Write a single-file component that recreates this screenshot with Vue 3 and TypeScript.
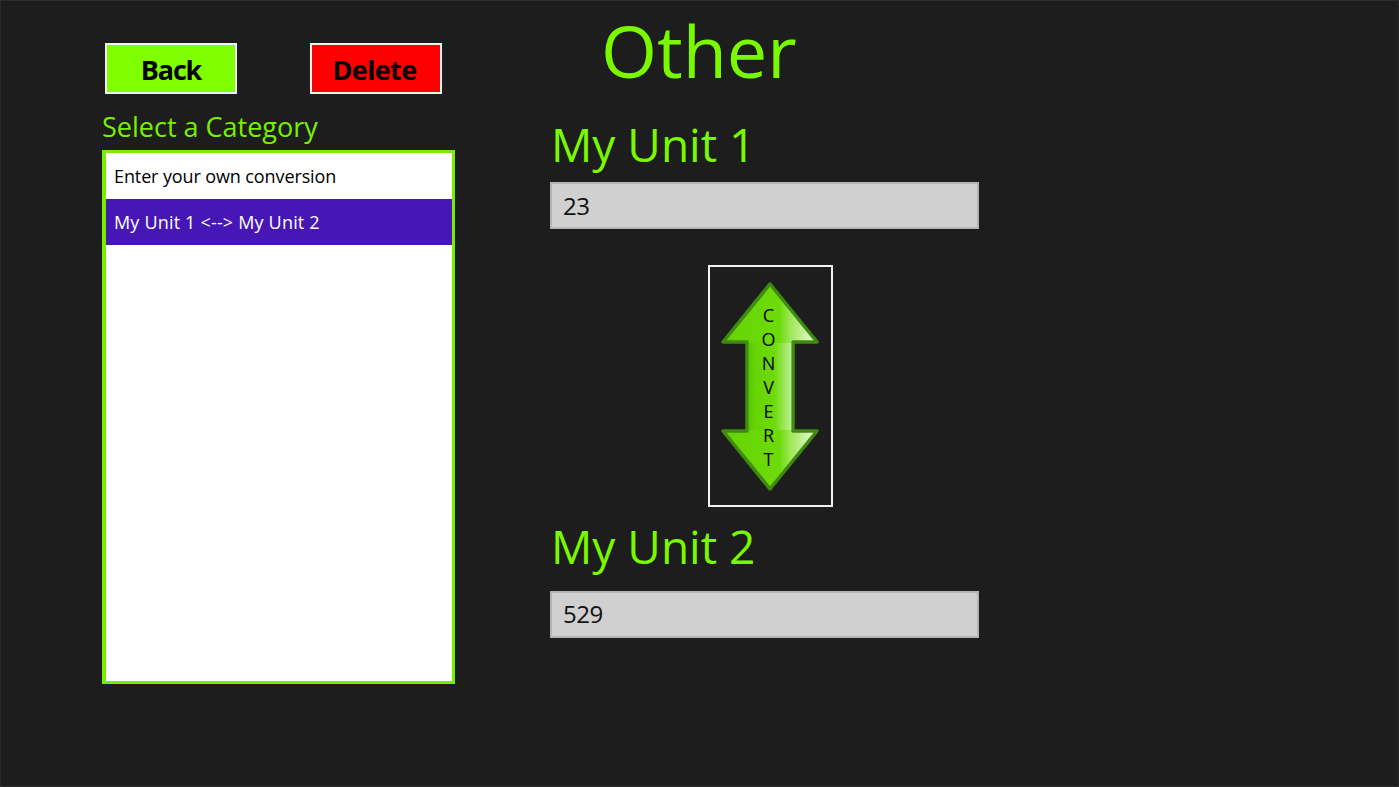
<script setup lang="ts">
const letters: string[] = 'CONVERT'.split('')
const items = [
  { label: 'Enter your own conversion', selected: false },
  { label: 'My Unit 1 <--> My Unit 2', selected: true },
]
</script>

<template>
  <div class="page">
    <aside class="left">
      <div class="actions">
        <button class="btn back">Back</button>
        <button class="btn del">Delete</button>
      </div>
      <div class="cat-label">Select a Category</div>
      <ul class="list">
        <li v-for="it in items" :key="it.label" class="item" :class="{ selected: it.selected }">{{ it.label }}</li>
      </ul>
    </aside>
    <main class="right">
      <h1 class="title">Other</h1>
      <h2 class="unit first">My Unit 1</h2>
      <div class="field">23</div>
      <button class="convert">
        <svg class="arrow" width="121" height="238" viewBox="0 0 121 238">
          <defs>
            <linearGradient id="g" x1="0" y1="0" x2="1" y2="0">
              <stop offset="0" stop-color="#66d404" />
              <stop offset="0.6" stop-color="#6cdb08" />
              <stop offset="0.72" stop-color="#9ee85a" />
              <stop offset="0.95" stop-color="#e2f8cc" />
            </linearGradient>
            <linearGradient id="s" x1="0" y1="0" x2="1" y2="0">
              <stop offset="0" stop-color="#58c404" />
              <stop offset="0.15" stop-color="#66d404" />
              <stop offset="0.6" stop-color="#6cdb08" />
              <stop offset="1" stop-color="#bdf092" />
            </linearGradient>
          </defs>
          <path d="M60 17 L107 75 L83 75 L83 164 L107 164 L60 222 L13 164 L37 164 L37 75 L13 75 Z" fill="url(#g)" stroke="#3f8a10" stroke-width="3.5" stroke-linejoin="round" />
          <rect x="38.75" y="76" width="42.5" height="87" fill="url(#s)" />
        </svg>
        <span class="letters">
          <span v-for="(l, i) in letters" :key="i" class="letter">{{ l }}</span>
        </span>
      </button>
      <h2 class="unit second">My Unit 2</h2>
      <div class="field last">529</div>
    </main>
  </div>
</template>

<style scoped>
.page {
  width: 1399px;
  height: 787px;
  box-sizing: border-box;
  background: #1d1d1d;
  box-shadow: inset 0 0 0 1px #2c2c2c;
  display: flex;
  font-family: "Open Sans", "Noto Sans", sans-serif;
  overflow: hidden;
}
.left {
  width: 353px;
  margin-left: 102px;
  padding-top: 43px;
  display: flex;
  flex-direction: column;
}
.actions {
  display: flex;
  gap: 73px;
  padding-left: 3px;
}
.btn {
  width: 132px;
  height: 51px;
  box-sizing: border-box;
  border: 2px solid #f2f2f2;
  color: #000;
  font-family: inherit;
  font-size: 27px;
  font-weight: 700;
  letter-spacing: -0.8px;
  padding: 2px 0 0;
}
.back { background: #7fff00; letter-spacing: -1.2px; }
.del { background: #ff0000; letter-spacing: -0.6px; padding-right: 3px; }
.cat-label {
  color: #78f000;
  font-size: 27px;
  line-height: 36px;
  margin-top: 15px;
  height: 41px;
}
.list {
  list-style: none;
  margin: 0;
  padding: 0;
  height: 534px;
  box-sizing: border-box;
  border: 3px solid #76ee00;
  border-left-width: 4px;
  background: #fff;
}
.item {
  height: 46px;
  line-height: 46px;
  padding-left: 8px;
  font-size: 18px;
  letter-spacing: -0.11px;
  color: #000;
}
.item.selected {
  background: #4617b4;
  color: #fff;
  letter-spacing: 0.18px;
}
.right {
  margin-left: 95px;
  width: 430px;
  display: flex;
  flex-direction: column;
  align-items: flex-start;
}
.title {
  margin: 0 0 0 51px;
  font-size: 72px;
  font-weight: 400;
  color: #7af800;
  line-height: 100px;
  height: 118px;
}
.unit {
  margin: 0 0 0 1px;
  font-weight: 400;
  font-size: 46px;
  line-height: 52px;
  color: #7af800;
  height: 64px;
}
.field {
  width: 429px;
  height: 47px;
  box-sizing: border-box;
  background: #d0d0d0;
  border: 2px solid #b4b4b4;
  color: #111;
  font-size: 24px;
  line-height: 43px;
  padding-left: 11px;
  letter-spacing: -0.5px;
}
.field.last { line-height: 41px; }
.convert {
  position: relative;
  margin: 36px 0 0 158px;
  width: 125px;
  height: 242px;
  box-sizing: border-box;
  padding: 0;
  background: transparent;
  border: 2px solid #f2f2f2;
  font-family: inherit;
}
.arrow { display: block; }
.letters {
  position: absolute;
  left: 0;
  top: 36px;
  width: 117px;
  display: flex;
  flex-direction: column;
  align-items: center;
}
.letter {
  height: 24px;
  line-height: 24px;
  font-size: 18px;
  color: #000;
}
.second { margin-top: 9px; height: 75px; line-height: 60px; }
</style>
